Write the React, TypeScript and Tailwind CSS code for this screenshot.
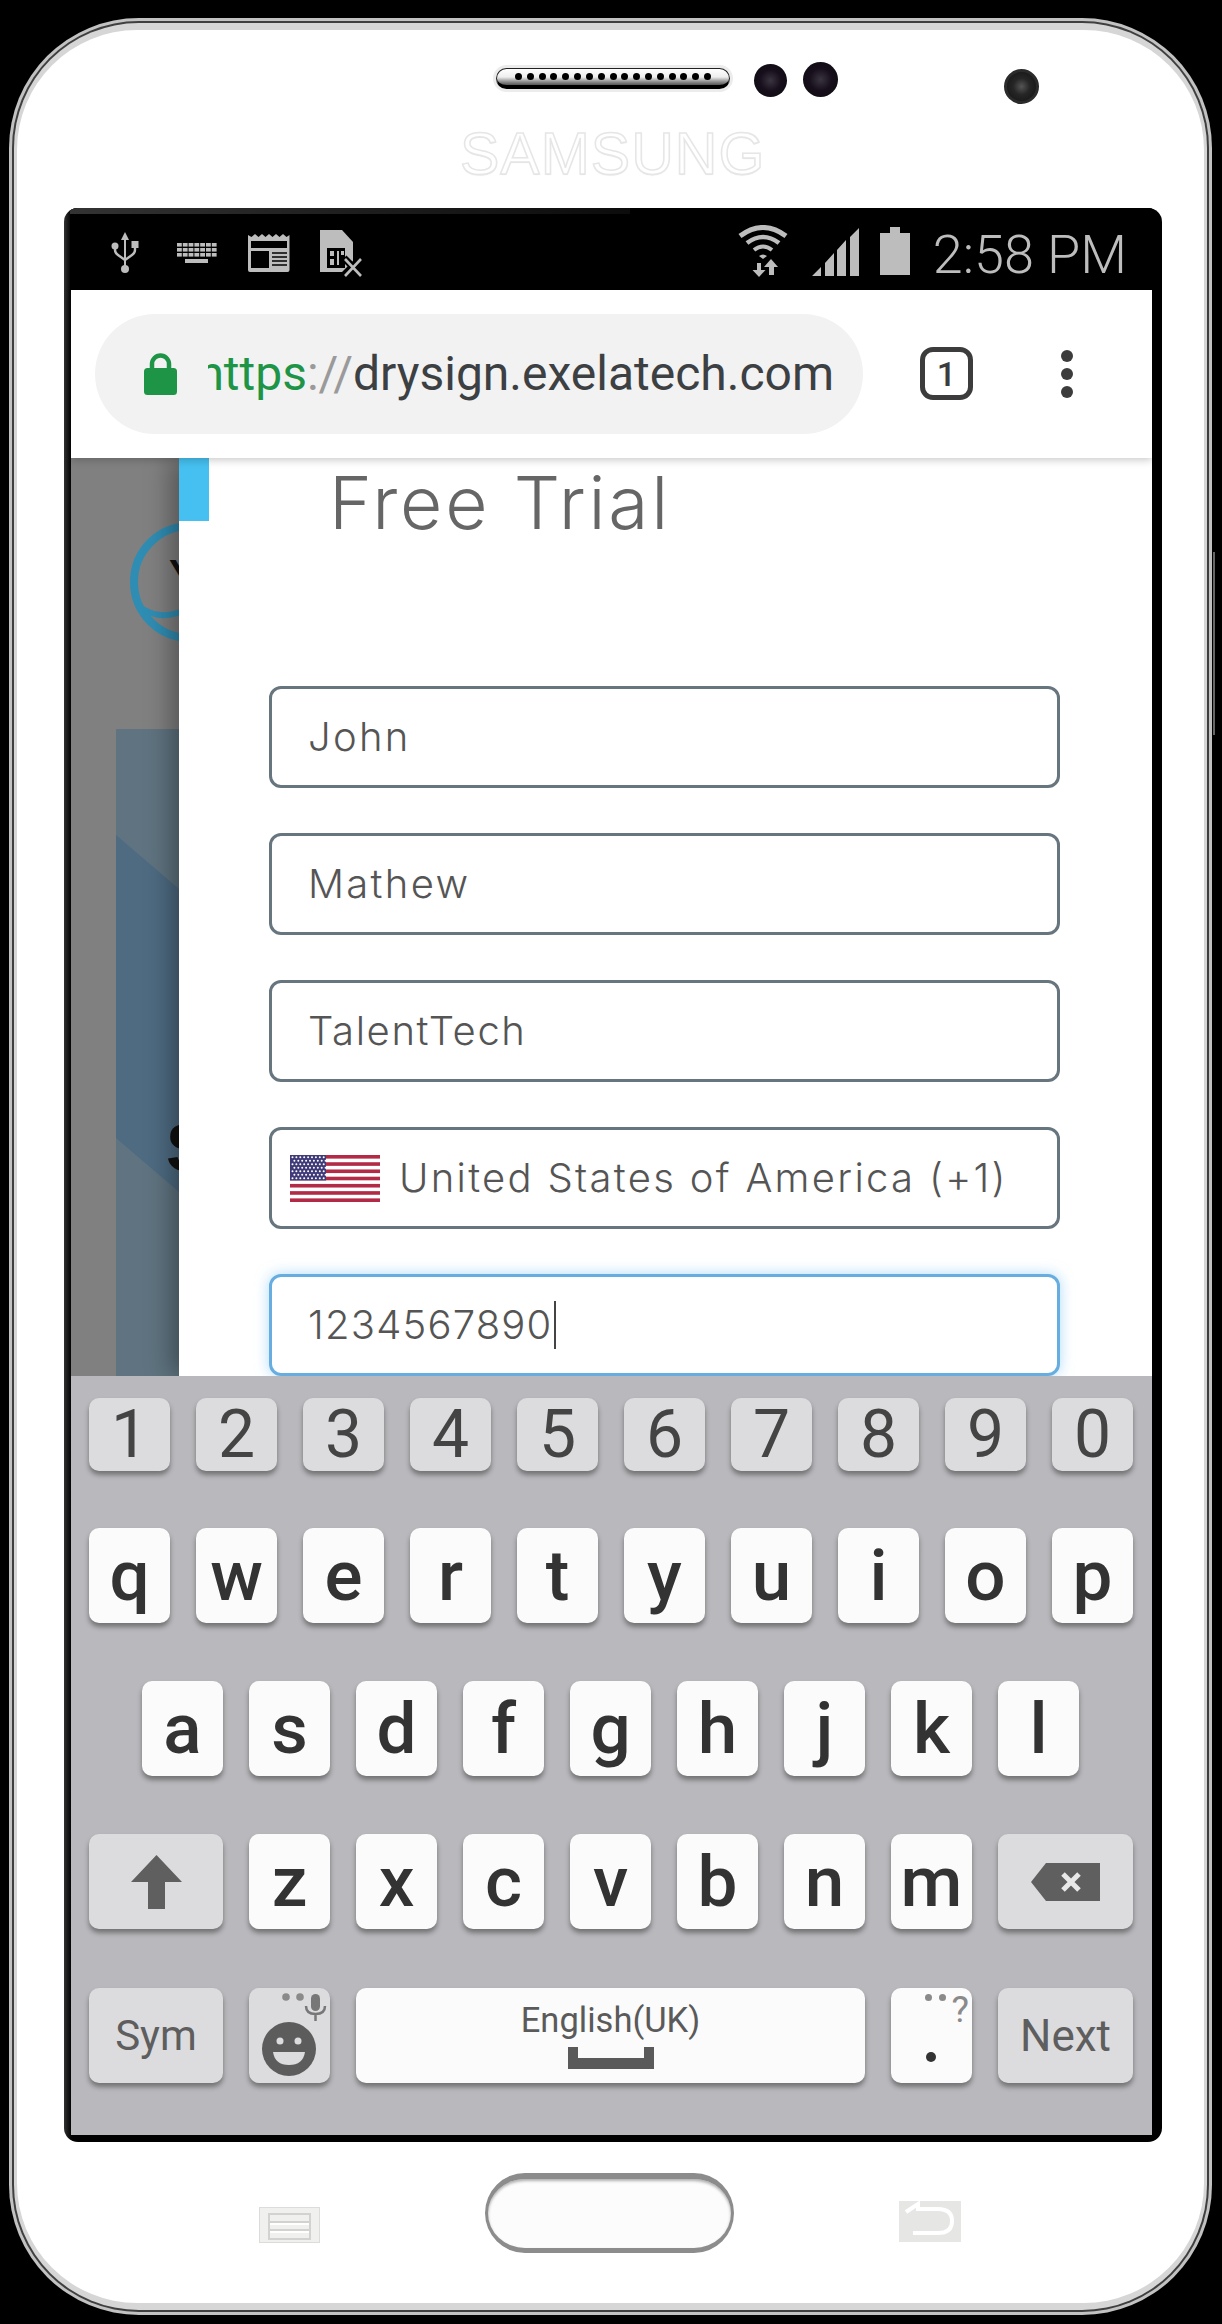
import React from "react";

const GRAY = "#bdbdbd";

function Usb() {
  return (
    <svg width="28" height="41" viewBox="0 0 28 41" className="mt-[24px] shrink-0">
      <path d="M14 0l4 8h-3v26h-2V8h-3z" fill={GRAY} />
      <path d="M4 12v6q0 3 3 5l7 5 7-5q3-2 3-5v-5" fill="none" stroke={GRAY} strokeWidth="2.4" />
      <circle cx="4" cy="14" r="3.5" fill={GRAY} />
      <rect x="20.5" y="9" width="7" height="7" fill={GRAY} />
      <circle cx="14" cy="37" r="4" fill={GRAY} />
    </svg>
  );
}

function KeyboardIcon() {
  const rows = [0, 1, 2];
  const cols = [0, 1, 2, 3, 4, 5, 6];
  return (
    <svg width="40" height="22" viewBox="0 0 40 22" className="mt-[35px] shrink-0">
      {rows.map((r) =>
        cols.map((c) => <rect key={`${r}-${c}`} x={c * 5.8} y={r * 5} width="4.8" height="3.6" fill={GRAY} />)
      )}
      <rect x="8" y="16" width="23" height="4" fill={GRAY} />
    </svg>
  );
}

function Newspaper() {
  return (
    <svg width="42" height="39" viewBox="0 0 42 39" className="mt-[25px] shrink-0">
      <path
        d="M0 2l3.5 2 3.5-3 3.5 3 3.5-3 3.5 3 3.5-3 3.5 3 3.5-3 3.5 3 3.5-3 3.5 3 3-2v35q0 2-2 2H2q-2 0-2-2z"
        fill={GRAY}
      />
      <rect x="3" y="8" width="36" height="7" fill="#000" />
      <rect x="3" y="18" width="18" height="17" fill="#000" />
      <path d="M24 20h15M24 24h15M24 28h15M24 32h15" stroke="#000" strokeWidth="1.6" />
    </svg>
  );
}

function Sim() {
  return (
    <svg width="43" height="47" viewBox="0 0 43 47" className="mt-[22px] shrink-0">
      <path d="M0 0h22l11 12v22l-4 6-4 2H0z" fill={GRAY} />
      <rect x="7" y="18" width="18" height="20" fill="#000" />
      <path d="M10 21h4v5h-4zM10 29h4v6h-4zM17 21h2v14h-2zM21 21h3v4h-3z" fill={GRAY} />
      <path d="M24 28l17 17M41 28L24 45" stroke="#000" strokeWidth="7" />
      <path d="M25 29l16 17M41 29L25 46" stroke={GRAY} strokeWidth="2.6" />
    </svg>
  );
}

function Wifi() {
  return (
    <svg width="50" height="52" viewBox="0 0 50 52" className="mt-[17px] shrink-0">
      <path d="M2 11Q25-6 48 11" fill="none" stroke={GRAY} strokeWidth="5" />
      <path d="M9 18Q25 6 41 18" fill="none" stroke={GRAY} strokeWidth="4.6" />
      <path d="M16 25q9-7 18 0" fill="none" stroke={GRAY} strokeWidth="4" />
      <path d="M21 31q4-3 8 0l-4 3z" fill={GRAY} />
      <path d="M19 38v7h-4.500l6.500 7 6.500-7H23v-7z" fill={GRAY} />
      <path d="M33 34l7 8h-4v8h-5v-8h-5z" fill={GRAY} />
    </svg>
  );
}

function Signal() {
  return (
    <svg width="47" height="48" viewBox="0 0 47 48" className="mt-[20px] shrink-0">
      <path d="M0 48l9-9v9zM13 48V35l9-10v23zM25 48V22l9-10v36zM38 48V9l9-9v48z" fill={GRAY} />
    </svg>
  );
}

function Battery() {
  return (
    <svg width="30" height="48" viewBox="0 0 30 48" className="mt-[19px] shrink-0">
      <path d="M10 0h10v6h10v42H0V6h10z" fill={GRAY} />
    </svg>
  );
}

function Lock() {
  return (
    <svg width="33" height="42" viewBox="0 0 33 42" className="shrink-0">
      <path d="M8 18v-7a8.500 8.500 0 0 1 17 0v7" fill="none" stroke="#1e9447" strokeWidth="4.500" />
      <rect x="0" y="15" width="33" height="27" rx="3.500" fill="#1e9447" />
    </svg>
  );
}

function Flag() {
  const stripes = [0, 2, 4, 6, 8, 10, 12];
  const h = 47 / 13;
  const starRows = [0, 1, 2, 3, 4, 5, 6];
  const starCols = [0, 1, 2, 3, 4, 5, 6, 7, 8];
  return (
    <svg width="90" height="47" viewBox="0 0 90 47" className="shrink-0">
      <rect width="90" height="47" fill="#fff" />
      {stripes.map((s) => (
        <rect key={s} x="0" y={s * h} width="90" height={h} fill="#b22a45" />
      ))}
      <rect width="36" height="25.500" fill="#3f3a78" />
      {starRows.map((r) =>
        starCols.map((c) => (
          <circle key={`${r}-${c}`} cx={2.5 + c * 3.9 + (r % 2) * 1.9} cy={2.2 + r * 3.5} r="1" fill="#fff" />
        ))
      )}
    </svg>
  );
}

function Field({ children, focus }: { children: React.ReactNode; focus?: boolean }) {
  return (
    <div
      className={
        focus
          ? "flex items-center h-[102px] w-[791px] shrink-0 rounded-[12px] border-[3px] border-[#68ade0] bg-white pl-[36px] shadow-[0_0_14px_rgba(110,190,245,0.55)]"
          : "flex items-center h-[102px] w-[791px] shrink-0 rounded-[12px] border-[3px] border-[#67757f] bg-white pl-[36px]"
      }
    >
      {children}
    </div>
  );
}

const fieldText = "[font-family:Inter,sans-serif] font-light text-[40px] leading-none text-[#555] tracking-[2.3px]";

function Key({
  w = "w-[81px]",
  h = "h-[95px]",
  func,
  children,
}: {
  w?: string;
  h?: string;
  func?: boolean;
  children?: React.ReactNode;
}) {
  return (
    <div
      className={`relative flex items-center justify-center ${w} ${h} shrink-0 rounded-[10px] ${
        func ? "bg-[#dcdcde]" : "bg-[#fbfbfb]"
      } shadow-[0_4px_5px_rgba(0,0,0,0.38)]`}
    >
      {children}
    </div>
  );
}

const letter = "[font-family:Roboto,sans-serif] font-medium text-[71px] leading-none text-[#333]";

function LetterRow({ keys }: { keys: string[] }) {
  return (
    <>
      {keys.map((k) => (
        <Key key={k}>
          <span className={letter}>{k}</span>
        </Key>
      ))}
    </>
  );
}

export default function App() {
  const dots = Array.from({ length: 17 }, (_, i) => i);
  return (
    <div className="relative w-[1222px] h-[2324px] bg-black pl-[9px] pt-[18px] overflow-hidden">
      {/* side button */}
      <div className="absolute left-[1213px] top-[552px] w-[2px] h-[183px] bg-[#666]" />
      <div className="w-[1203px] h-[2297px] rounded-[130px] bg-[#c2c2c2] p-[3px]">
        <div className="w-full h-full rounded-[127px] bg-[#3f3f3f] p-[2px]">
          <div className="w-full h-full rounded-[125px] bg-[#d6d6d6] px-[3px] py-[7px]">
            <div className="w-full h-full rounded-[120px] bg-white flex flex-col">
              {/* Top of phone */}
              <div className="h-[178px] shrink-0 flex flex-col">
                <div className="flex items-start h-[102px] pl-[476px]">
                  <div className="mt-[35px] w-[240px] h-[27px] rounded-full bg-[#ececec] p-[3px] shrink-0">
                    <div className="flex items-start justify-between w-full h-full rounded-full border border-[#222] border-b-[4px] border-b-black bg-linear-to-b from-white via-[#eeeeee] to-[#555] px-[18px] pt-[4px]">
                      {dots.map((d) => (
                        <span key={d} className="block w-[7px] h-[7px] rounded-full bg-black" />
                      ))}
                    </div>
                  </div>
                  <div className="ml-[21px] mt-[34px] w-[33px] h-[33px] rounded-full bg-[radial-gradient(circle,#3a3440_0%,#17101c_45%,#0c0810_100%)] shrink-0" />
                  <div className="ml-[16px] mt-[32px] w-[35px] h-[35px] rounded-full bg-[radial-gradient(circle,#3a3440_0%,#17101c_45%,#0c0810_100%)] shrink-0" />
                  <div className="ml-[166px] mt-[39px] w-[35px] h-[35px] rounded-full border-[3px] border-[#2b2b2b] bg-[radial-gradient(circle,#555_0%,#262626_40%,#111_100%)] shrink-0" />
                </div>
                <div className="pl-[443px]">
                  <span className="block w-[302px] [font-family:'Liberation_Sans',sans-serif] text-[59px] leading-[45px] font-normal tracking-[1px] text-white [-webkit-text-stroke:1.5px_#e6e6e6] [text-shadow:0_1px_1px_#e2e2e2]">
                    SAMSUNG
                  </span>
                </div>
              </div>

              {/* Screen */}
              <div className="ml-[47px] w-[1098px] h-[1934px] shrink-0 rounded-[14px] pl-[7px] pr-[10px] pb-[7px] flex flex-col overflow-hidden bg-linear-to-r from-[#333] from-0% via-black via-1% to-black">
                {/* status */}
                <div className="relative h-[82px] shrink-0 flex justify-between bg-black -ml-[1px]">
                  <div className="absolute left-0 top-0 w-[560px] h-[6px] bg-linear-to-r from-[#333] to-[#0c0c0c]" />
                  <div className="flex items-start pl-[41px]">
                    <Usb />
                    <div className="ml-[38px]">
                      <KeyboardIcon />
                    </div>
                    <div className="ml-[31px]">
                      <Newspaper />
                    </div>
                    <div className="ml-[30px]">
                      <Sim />
                    </div>
                  </div>
                  <div className="flex items-start pr-[25px]">
                    <Wifi />
                    <div className="ml-[24px]">
                      <Signal />
                    </div>
                    <div className="ml-[21px]">
                      <Battery />
                    </div>
                    <span className="ml-[23px] mt-[17px] [font-family:Roboto,sans-serif] font-light text-[54px] leading-[60px] text-[#bdbdbd] whitespace-nowrap">
                      2:58 PM
                    </span>
                  </div>
                </div>

                {/* chrome toolbar */}
                <div className="relative z-10 h-[168px] shrink-0 bg-white flex items-start shadow-[0_2px_8px_rgba(0,0,0,0.22)]">
                  <div className="ml-[24px] mt-[24px] w-[768px] h-[120px] rounded-full bg-[#f2f2f2] flex items-center pl-[49px] shrink-0">
                    <Lock />
                    <div className="ml-[31px] w-[626px] overflow-hidden flex justify-end">
                      <span className="[font-family:Roboto,sans-serif] text-[48px] leading-[60px] whitespace-nowrap text-[#3c4043]">
                        <span className="text-[#1e9447]">https</span>
                        <span className="text-[#9a9a9a]">://</span>drysign.exelatech.com
                      </span>
                    </div>
                  </div>
                  <div className="ml-[57px] mt-[57px] w-[53px] h-[53px] rounded-[13px] border-[5px] border-[#3c3c3c] flex items-center justify-center [font-family:Roboto,sans-serif] font-medium text-[34px] leading-none text-[#3c3c3c] shrink-0">
                    1
                  </div>
                  <div className="ml-[88px] mt-[60px] flex flex-col gap-[6px] shrink-0">
                    <span className="block w-[12px] h-[12px] rounded-full bg-[#3c3c3c]" />
                    <span className="block w-[12px] h-[12px] rounded-full bg-[#3c3c3c]" />
                    <span className="block w-[12px] h-[12px] rounded-full bg-[#3c3c3c]" />
                  </div>
                </div>

                {/* page */}
                <div className="h-[918px] shrink-0 flex overflow-hidden">
                  <div className="relative w-[108px] h-full shrink-0 bg-[#808080] overflow-hidden">
                    <svg width="108" height="200" viewBox="0 0 108 200" className="absolute left-0 top-0">
                      <ellipse cx="119" cy="124" rx="56" ry="56" fill="none" stroke="#2f8db3" strokeWidth="8" />
                      <path d="M70 150q18 12 40 4" fill="none" stroke="#2f8db3" strokeWidth="6" />
                    </svg>
                    <span className="absolute left-[98px] top-[96px] [font-family:'Liberation_Sans',sans-serif] font-bold text-[40px] leading-none text-[#111]">
                      Y
                    </span>
                    <div className="absolute left-[45px] top-[271px] w-[63px] h-[647px] bg-[#5f7480]">
                      <svg width="63" height="647" viewBox="0 0 63 647" className="absolute left-0 top-0">
                        <path d="M0 106L63 160V463L0 409z" fill="#4e6b82" />
                      </svg>
                      <span className="absolute left-[50px] top-[384px] [font-family:'Liberation_Sans',sans-serif] font-bold text-[68px] leading-none text-[#111]">
                        S
                      </span>
                    </div>
                  </div>
                  <div className="relative flex-1 bg-white shadow-[-8px_0_24px_rgba(0,0,0,0.35)] flex flex-col pl-[90px]">
                    <div className="absolute left-0 top-0 w-[30px] h-[63px] bg-[#45c0f0]" />
                    <div className="h-[228px] shrink-0 pl-[60px] pt-[5px]">
                      <span className="block [font-family:Inter,sans-serif] font-light text-[73px] leading-[80px] text-[#666] tracking-[2.8px]">
                        Free Trial
                      </span>
                    </div>
                    <div className="flex flex-col gap-[45px]">
                      <Field>
                        <span className={fieldText}>John</span>
                      </Field>
                      <Field>
                        <span className={fieldText}>Mathew</span>
                      </Field>
                      <Field>
                        <span className="[font-family:Inter,sans-serif] font-light text-[40px] leading-none text-[#555] tracking-[1.6px]">
                          TalentTech
                        </span>
                      </Field>
                      <div className="flex items-center h-[102px] w-[791px] shrink-0 rounded-[12px] border-[3px] border-[#67757f] bg-white pl-[18px]">
                        <Flag />
                        <span className={`ml-[19px] whitespace-nowrap ${fieldText}`}>United States of America (+1)</span>
                      </div>
                      <Field focus>
                        <span className="[font-family:Inter,sans-serif] font-light text-[40px] leading-none text-[#555] tracking-[1.2px]">
                          1234567890
                        </span>
                        <span className="block w-[2px] h-[48px] bg-[#444] ml-[1px]" />
                      </Field>
                    </div>
                  </div>
                </div>

                {/* keyboard */}
                <div className="relative z-10 h-[759px] shrink-0 bg-[#b9b8bc] pl-[18px] pt-[22px] flex flex-col">
                  <div className="flex gap-[26px]">
                    {["1", "2", "3", "4", "5", "6", "7", "8", "9", "0"].map((k) => (
                      <Key key={k} func h="h-[73px]">
                        <span className="[font-family:Roboto,sans-serif] text-[66px] leading-none text-[#444] mt-[1px]">
                          {k}
                        </span>
                      </Key>
                    ))}
                  </div>
                  <div className="flex gap-[26px] mt-[57px]">
                    <LetterRow keys={["q", "w", "e", "r", "t", "y", "u", "i", "o", "p"]} />
                  </div>
                  <div className="flex gap-[26px] mt-[58px] ml-[53px]">
                    <LetterRow keys={["a", "s", "d", "f", "g", "h", "j", "k", "l"]} />
                  </div>
                  <div className="flex gap-[26px] mt-[58px]">
                    <Key func w="w-[134px]">
                      <svg width="51" height="54" viewBox="0 0 51 54">
                        <path d="M25.500 0L51 27H34V54H17V27H0z" fill="#5f5f5f" />
                      </svg>
                    </Key>
                    <LetterRow keys={["z", "x", "c", "v", "b", "n", "m"]} />
                    <Key func w="w-[135px]">
                      <svg width="69" height="38" viewBox="0 0 69 38">
                        <path d="M15 0H69V38H15L0 19z" fill="#5f5f5f" />
                        <path d="M32 11l16 16M48 11L32 27" stroke="#e8e8e8" strokeWidth="5" />
                      </svg>
                    </Key>
                  </div>
                  <div className="flex gap-[26px] mt-[59px]">
                    <Key func w="w-[134px]">
                      <span className="[font-family:Roboto,sans-serif] text-[42px] leading-none text-[#5e5e5e]">
                        Sym
                      </span>
                    </Key>
                    <Key func>
                      <svg width="81" height="95" viewBox="0 0 81 95">
                        <circle cx="37" cy="9" r="3.800" fill="#8a8a8a" />
                        <circle cx="51" cy="9" r="3.800" fill="#8a8a8a" />
                        <rect x="62" y="6" width="9" height="17" rx="4.500" fill="#777" />
                        <path d="M57 18q0 8 9.500 8T76 18M66.500 26v7" fill="none" stroke="#777" strokeWidth="2.500" />
                        <circle cx="40" cy="61" r="27" fill="#5c5c5c" />
                        <circle cx="31" cy="53" r="3.500" fill="#dcdcde" />
                        <circle cx="49" cy="53" r="3.500" fill="#dcdcde" />
                        <path d="M24 64h32q-2 13-16 13T24 64z" fill="#dcdcde" />
                      </svg>
                    </Key>
                    <Key w="w-[509px]">
                      <div className="flex flex-col items-center -mt-[2px]">
                        <span className="[font-family:Roboto,sans-serif] text-[34.5px] leading-[40px] text-[#5a5a5a]">
                          English(UK)
                        </span>
                        <svg width="86" height="22" viewBox="0 0 86 22" className="mt-[7px]">
                          <path d="M0 0h10v11h66V0h10v22H0z" fill="#5a5a5a" />
                        </svg>
                      </div>
                    </Key>
                    <Key>
                      <span className="absolute left-[34px] top-[6px] w-[7px] h-[7px] rounded-full bg-[#8a8a8a]" />
                      <span className="absolute left-[48px] top-[6px] w-[7px] h-[7px] rounded-full bg-[#8a8a8a]" />
                      <span className="absolute right-[3px] top-[3px] [font-family:Roboto,sans-serif] text-[37px] leading-none text-[#8a8a8a]">
                        ?
                      </span>
                      <span className="absolute left-[35px] top-[64px] w-[10px] h-[10px] rounded-full bg-[#333]" />
                    </Key>
                    <Key func w="w-[135px]">
                      <span className="[font-family:Roboto,sans-serif] text-[44px] leading-none text-[#5e5e5e]">
                        Next
                      </span>
                    </Key>
                  </div>
                </div>
              </div>

              {/* Bottom of phone */}
              <div className="flex items-start pl-[242px]">
                <svg width="61" height="36" viewBox="0 0 61 36" className="mt-[65px] shrink-0">
                  <rect width="61" height="36" fill="#f0f0ee" />
                  <rect x="0.500" y="0.500" width="60" height="35" fill="none" stroke="#dcdcda" />
                  <rect x="10" y="7" width="41" height="25" fill="none" stroke="#d2d2d0" strokeWidth="2" />
                  <path d="M11 15h39M11 23h39" stroke="#d2d2d0" strokeWidth="2" />
                  <path d="M11 17h39M11 25h39" stroke="#fff" strokeWidth="2" />
                </svg>
                <div className="ml-[165px] mt-[31px] w-[249px] h-[80px] rounded-[40px] border-[3px] border-t-[6px] border-b-[5px] border-[#8c8c8c] bg-[#fcfcfc] shadow-[inset_0_2px_3px_rgba(0,0,0,0.3)] shrink-0" />
                <svg width="62" height="41" viewBox="0 0 62 41" className="ml-[165px] mt-[59px] shrink-0">
                  <rect width="62" height="41" fill="#e6e6e4" />
                  <path d="M7 11L19 3v5h20q14 0 14 12t-14 12H14" fill="none" stroke="#fff" strokeWidth="4" />
                </svg>
              </div>
            </div>
          </div>
        </div>
      </div>
    </div>
  );
}
